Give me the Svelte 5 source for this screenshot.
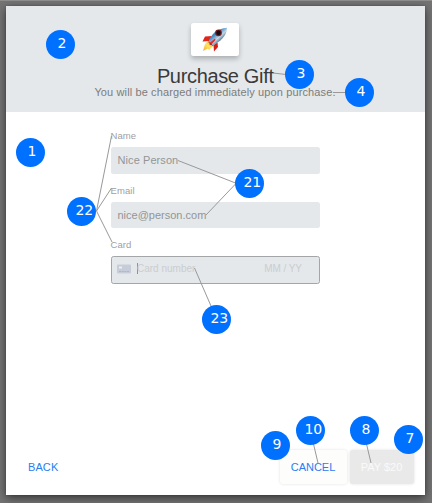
<script>
  const pins = [
    { n: 1, x: 30.5, y: 152.5 },
    { n: 2, x: 60.5, y: 44.5 },
    { n: 3, x: 299.5, y: 74.5 },
    { n: 4, x: 359.5, y: 92.5 },
    { n: 21, x: 249.5, y: 183.5 },
    { n: 22, x: 81.5, y: 211.5 },
    { n: 23, x: 216.5, y: 319.5 },
    { n: 7, x: 408.5, y: 439.5 },
    { n: 8, x: 364.5, y: 430.5 },
    { n: 9, x: 275.5, y: 445.5 },
    { n: 10, x: 310.5, y: 430.5 }
  ];
  const leaders = [
    [273, 73, 286, 74.5],
    [333, 92.5, 346, 92.5],
    [178, 160.5, 235.5, 183],
    [206, 215, 235.5, 184],
    [111.5, 136, 96.5, 211],
    [111.5, 188, 96.5, 211],
    [112, 242, 96.5, 211],
    [194.5, 268, 211, 306],
    [313.5, 444, 318, 463],
    [366.5, 444, 371, 463]
  ];
</script>

<div class="backdrop">
  <section class="modal">
    <header>
      <div class="logo">
        <svg width="26" height="25" viewBox="0 0 26 25">
          <defs>
            <linearGradient id="hull" x1="0.2" y1="0.2" x2="0.75" y2="0.8">
              <stop offset="0" stop-color="#4a6f90" />
              <stop offset="0.3" stop-color="#4690c9" />
              <stop offset="0.6" stop-color="#c3d6e4" />
              <stop offset="0.8" stop-color="#6c8ba6" />
              <stop offset="1" stop-color="#2d4258" />
            </linearGradient>
            <linearGradient id="flame" x1="1" y1="0" x2="0" y2="1">
              <stop offset="0" stop-color="#ef9a20" />
              <stop offset="0.5" stop-color="#ffe45c" />
              <stop offset="1" stop-color="#f6a93b" />
            </linearGradient>
          </defs>
          <path d="M6 14 L3 17 L1 24 L6 21.5 L7 23 L12 18Z" fill="url(#flame)" />
          <path d="M10 9 L3 9.5 L0.5 14.5 L7 14Z" fill="#e2241d" />
          <path d="M15.5 15.5 L16 20 L12 24.5 L11.5 18Z" fill="#d51d1a" />
          <path d="M6.5 15 C9 7 15 1.5 25 0.8 C25 9 18 15 10.5 18.5Z" fill="url(#hull)" />
          <path d="M8 15.5 L13 11.5 L13.5 13 L9 18 L7.5 18Z" fill="#df3026" />
          <circle cx="16.5" cy="5.8" r="3.4" fill="#7c1c25" />
          <circle cx="16.5" cy="5.8" r="2.2" fill="#101119" />
          <path d="M6.5 15 L10.5 18.5" stroke="#57434b" stroke-width="1" />
        </svg>
      </div>
      <h1>Purchase Gift</h1>
      <p>You will be charged immediately upon purchase.</p>
    </header>

    <form>
      <label for="name">Name</label>
      <div class="field" id="name"><span class="val-name">Nice Person</span></div>
      <label for="email">Email</label>
      <div class="field" id="email"><span>nice@person.com</span></div>
      <label for="card">Card</label>
      <div class="field card" id="card">
        <svg width="14" height="10" viewBox="0 0 14 10">
          <rect y="0.5" width="14" height="9" rx="1" fill="#c7cdd8" />
          <rect x="2" y="2.5" width="3" height="2" fill="#eceff3" />
          <path d="M2 7.5 H12" stroke="#aeb5c4" stroke-width="1" stroke-dasharray="2 .7" />
        </svg>
        <i class="caret"></i>
        <span class="number">Card number</span>
        <span class="expiry">MM / YY</span>
      </div>
    </form>

    <footer>
      <span class="back">BACK</span>
      <span class="btn cancel"><b>CANCEL</b></span>
      <span class="btn pay"><b>PAY $20</b></span>
    </footer>
  </section>

  <svg class="leaders" width="432" height="503">
    {#each leaders as [x1, y1, x2, y2]}
      <line {x1} {y1} {x2} {y2} />
    {/each}
  </svg>
  {#each pins as pin}
    <span class="pin" class:wide={pin.n > 9} style="left:{pin.x - 14.5}px;top:{pin.y - 14.5}px">{pin.n}</span>
  {/each}
</div>

<style>
  .backdrop {
    position: relative;
    box-sizing: border-box;
    width: 432px;
    height: 503px;
    padding: 5px 7px 8px 6px;
    overflow: hidden;
    background: #747474;
    border-top: 1px solid #8c8c8c;
    font-family: "Liberation Sans", Arial, sans-serif;
  }
  .modal {
    display: flex;
    flex-direction: column;
    width: 419px;
    height: 489px;
    background: #fff;
    box-shadow: 0 3px 9px rgba(0, 0, 0, 0.55), 0 0 2px rgba(0, 0, 0, 0.2);
  }
  header {
    display: flex;
    flex-direction: column;
    align-items: center;
    height: 106px;
    background: #e4e8eb;
  }
  .logo {
    display: flex;
    align-items: center;
    justify-content: center;
    width: 48px;
    height: 33px;
    margin: 17px 0.4px 0 0;
    background: #fff;
    border-radius: 2.5px;
    box-shadow: 0 3px 5px rgba(0, 0, 0, 0.24);
  }
  h1 {
    margin: 9px 0.5px 0 0;
    font-size: 20px;
    line-height: 22px;
    font-weight: 400;
    letter-spacing: -0.34px;
    color: #3a3a3a;
    white-space: nowrap;
  }
  p {
    margin: 0 1px 0 0;
    font-size: 11px;
    line-height: 11px;
    letter-spacing: 0.12px;
    color: #7c7c7c;
    white-space: nowrap;
  }
  form {
    display: flex;
    flex-direction: column;
    width: 209.5px;
    margin: 17px 0 0 104.5px;
  }
  label {
    height: 18px;
    font-size: 9.5px;
    line-height: 14px;
    letter-spacing: 0.1px;
    color: #a0a0a0;
  }
  .field {
    display: flex;
    align-items: center;
    box-sizing: border-box;
    height: 26.5px;
    margin-bottom: 10px;
    padding: 0 7px;
    border-radius: 2.5px;
    background: #e4e8eb;
    font-size: 11px;
    color: #939596;
    white-space: nowrap;
  }
  .val-name {
    letter-spacing: 0.08px;
  }
  .card {
    height: 27.5px;
    padding: 0 17px 2px 5.5px;
    border: 1px solid #a3a5a6;
    font-size: 10px;
    color: #cbcdcf;
  }
  .caret {
    width: 1px;
    height: 11px;
    margin-left: 5.5px;
    background: #909192;
  }
  .number {
    margin-left: -0.5px;
  }
  .expiry {
    margin-left: auto;
    letter-spacing: -0.05px;
  }
  footer {
    display: flex;
    align-items: center;
    height: 34px;
    margin: auto 11.5px 11px 22px;
    font-size: 11px;
    color: #2b7cf2;
    white-space: nowrap;
  }
  .back {
    margin-right: auto;
    letter-spacing: 0.1px;
  }
  .btn {
    display: flex;
    align-items: center;
    justify-content: center;
    height: 34px;
    border-radius: 3px;
    box-shadow: 0 0 3px rgba(0, 0, 0, 0.12);
  }
  b {
    font-weight: 400;
  }
  .cancel {
    width: 67px;
    margin-right: 3px;
    background: #fdfdfc;
  }
  .pay {
    width: 64px;
    background: #e9e9e9;
    color: #fafafa;
  }
  .leaders {
    position: absolute;
    left: 0;
    top: -1px;
  }
  line {
    stroke: #999;
    stroke-width: 1;
  }
  .pin {
    position: absolute;
    box-sizing: border-box;
    width: 29px;
    height: 29px;
    margin-top: -1px;
    padding-left: 11.5px;
    border-radius: 50%;
    background: #0070ff;
    color: #fff;
    font: 14px/27px "DejaVu Sans", sans-serif;
  }
  .wide {
    padding-left: 8.5px;
    letter-spacing: -0.2px;
  }
</style>
